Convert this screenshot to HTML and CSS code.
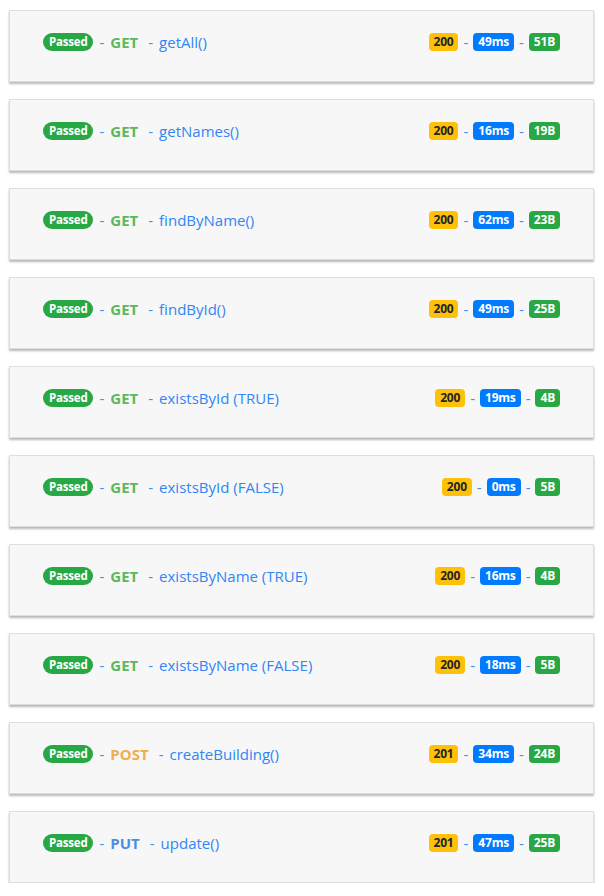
FILE: index.html
```html
<!DOCTYPE html>
<html>
<head>
<meta charset="utf-8">
<link rel="stylesheet" href="styles.css">
</head>
<body>
<div class="list">
  <div class="card"><div class="left"><span class="pill">Passed</span><span class="dash">-</span><span class="method get">GET</span><span class="dash wide">-</span><span class="name">getAll()</span></div><div class="right"><span class="b y">200</span><span class="dash">-</span><span class="b bl">49ms</span><span class="dash">-</span><span class="b g">51B</span></div></div>
  <div class="card"><div class="left"><span class="pill">Passed</span><span class="dash">-</span><span class="method get">GET</span><span class="dash wide">-</span><span class="name">getNames()</span></div><div class="right"><span class="b y">200</span><span class="dash">-</span><span class="b bl">16ms</span><span class="dash">-</span><span class="b g">19B</span></div></div>
  <div class="card"><div class="left"><span class="pill">Passed</span><span class="dash">-</span><span class="method get">GET</span><span class="dash wide">-</span><span class="name">findByName()</span></div><div class="right"><span class="b y">200</span><span class="dash">-</span><span class="b bl">62ms</span><span class="dash">-</span><span class="b g">23B</span></div></div>
  <div class="card"><div class="left"><span class="pill">Passed</span><span class="dash">-</span><span class="method get">GET</span><span class="dash wide">-</span><span class="name">findById()</span></div><div class="right"><span class="b y">200</span><span class="dash">-</span><span class="b bl">49ms</span><span class="dash">-</span><span class="b g">25B</span></div></div>
  <div class="card"><div class="left"><span class="pill">Passed</span><span class="dash">-</span><span class="method get">GET</span><span class="dash wide">-</span><span class="name">existsById (TRUE)</span></div><div class="right"><span class="b y">200</span><span class="dash">-</span><span class="b bl">19ms</span><span class="dash">-</span><span class="b g">4B</span></div></div>
  <div class="card"><div class="left"><span class="pill">Passed</span><span class="dash">-</span><span class="method get">GET</span><span class="dash wide">-</span><span class="name">existsById (FALSE)</span></div><div class="right"><span class="b y">200</span><span class="dash">-</span><span class="b bl">0ms</span><span class="dash">-</span><span class="b g">5B</span></div></div>
  <div class="card"><div class="left"><span class="pill">Passed</span><span class="dash">-</span><span class="method get">GET</span><span class="dash wide">-</span><span class="name">existsByName (TRUE)</span></div><div class="right"><span class="b y">200</span><span class="dash">-</span><span class="b bl">16ms</span><span class="dash">-</span><span class="b g">4B</span></div></div>
  <div class="card"><div class="left"><span class="pill">Passed</span><span class="dash">-</span><span class="method get">GET</span><span class="dash wide">-</span><span class="name">existsByName (FALSE)</span></div><div class="right"><span class="b y">200</span><span class="dash">-</span><span class="b bl">18ms</span><span class="dash">-</span><span class="b g">5B</span></div></div>
  <div class="card"><div class="left"><span class="pill">Passed</span><span class="dash">-</span><span class="method post">POST</span><span class="dash wide">-</span><span class="name">createBuilding()</span></div><div class="right"><span class="b y">201</span><span class="dash">-</span><span class="b bl">34ms</span><span class="dash">-</span><span class="b g">24B</span></div></div>
  <div class="card"><div class="left"><span class="pill">Passed</span><span class="dash">-</span><span class="method put">PUT</span><span class="dash wide">-</span><span class="name">update()</span></div><div class="right"><span class="b y">201</span><span class="dash">-</span><span class="b bl">47ms</span><span class="dash">-</span><span class="b g">25B</span></div></div>
</div>
</body>
</html>
```
FILE: styles.css
```css
body {
  margin: 0;
  background: #ffffff;
  font-family: "Open Sans", "Noto Sans", sans-serif;
}
.list {
  display: flex;
  flex-direction: column;
  gap: 17px;
  padding: 10px 10px 0 9px;
}
.card {
  height: 72px;
  box-sizing: border-box;
  background: #f7f7f7;
  border: 1px solid #dedede;
  box-shadow: 0 2px 2px rgba(0,0,0,0.28);
  display: flex;
  justify-content: space-between;
  align-items: flex-start;
  padding: 21px 33px 0 33px;
}
.left, .right {
  display: flex;
  align-items: center;
  height: 20px;
}
.pill {
  background: #28a745;
  color: #fff;
  font-size: 11.5px;
  font-weight: 700;
  border-radius: 9px;
  padding: 0 6px;
  height: 18px;
  line-height: 18px;
  letter-spacing: -0.2px;
}
.dash {
  color: #3d8ef8;
  font-size: 15px;
  margin: 0 6px;
}
.right .dash { margin: 0 5px; }
.dash.wide { margin: 0 6px 0 10px; }
.method {
  font-size: 15px;
  font-weight: 700;
}
.get { color: #5cb85c; }
.post { color: #f0ad4e; }
.put { color: #4a90e2; }
.name {
  color: #2f86f6;
  font-size: 15px;
}
.b {
  font-size: 12px;
  font-weight: 700;
  border-radius: 4px;
  padding: 0 5px;
  height: 18px;
  line-height: 18px;
  letter-spacing: -0.2px;
}
.y { background: #ffc107; color: #212529; }
.bl { background: #007bff; color: #fff; }
.g { background: #28a745; color: #fff; }
```
